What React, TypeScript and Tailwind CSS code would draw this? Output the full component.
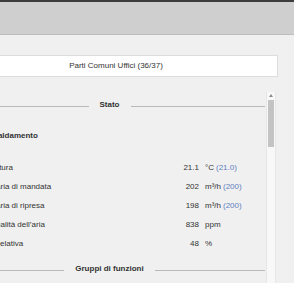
import React from 'react'

type Row = {
  label: string
  value: string
  unit: string
  setpoint?: string
}

const rows: Row[] = [
  { label: 'Temperatura', value: '21.1', unit: '°C', setpoint: '(21.0)' },
  { label: 'Portata aria di mandata', value: '202', unit: 'm³/h', setpoint: '(200)' },
  { label: 'Portata aria di ripresa', value: '198', unit: 'm³/h', setpoint: '(200)' },
  { label: 'Indice qualità dell’aria', value: '838', unit: 'ppm' },
  { label: 'Umidità relativa', value: '48', unit: '%' },
]

function Divider({ title }: { title: string }) {
  return (
    <div className="flex h-[26px] items-center pr-[1px]">
      <div className="mt-[3px] h-px flex-1 bg-[#b9b9b9]" />
      <span className="px-[11px] text-[8px] font-bold text-[#333]">{title}</span>
      <div className="mt-[3px] h-px flex-1 bg-[#b9b9b9]" />
    </div>
  )
}

export default function App() {
  return (
    <div
      className="h-[283px] w-[294px] overflow-hidden bg-[#f0f0f0] text-[#333]"
      style={{ fontFamily: '"Liberation Sans", Arial, sans-serif' }}
    >
      {/* barra superiore */}
      <div className="h-[2px] bg-[#3c3c3c]" />
      <div className="h-[33px] border-b border-[#bdbdbd] bg-[#cfcfcf]" />

      <div className="ml-[-46px] w-[324px]">
        <div className="mt-[20px] flex h-[22px] items-center justify-center border border-[#dddddd] bg-white text-[8px]">
          Parti Comuni Uffici (36/37)
        </div>

        <div className="mt-[15px] flex">
          {/* pannello */}
          <div className="w-[312px]">
            <Divider title="Stato" />

            <div className="mt-[8px] pl-[27px] text-[8px] font-bold leading-[19px]">Riscaldamento</div>

            <div className="mt-[13px]">
              {rows.map((r) => (
                <div key={r.label} className="flex h-[19px] items-center pl-[14px] text-[8px]">
                  <span className="w-[191px] whitespace-nowrap">{r.label}</span>
                  <span className="w-[40px] text-right">{r.value}</span>
                  <span className="whitespace-nowrap pl-[6px]">
                    {r.unit}
                    {r.setpoint && <span className="ml-[2px] text-[#5f7fbf]">{r.setpoint}</span>}
                  </span>
                </div>
              ))}
            </div>

            <div className="mt-[3px]">
              <Divider title="Gruppi di funzioni" />
            </div>
          </div>

          {/* scrollbar */}
          <div className="flex h-[200px] w-[10px] flex-col items-center border-x border-[#e6e6e6] bg-[#f8f8f8]">
            <div className="mt-[2px] h-0 w-0 border-x-[2px] border-b-[3px] border-x-transparent border-b-[#8a8a8a]" />
            <div className="mt-[3px] h-[47px] w-[6px] bg-[#c3c3c3]" />
          </div>
        </div>
      </div>
    </div>
  )
}
